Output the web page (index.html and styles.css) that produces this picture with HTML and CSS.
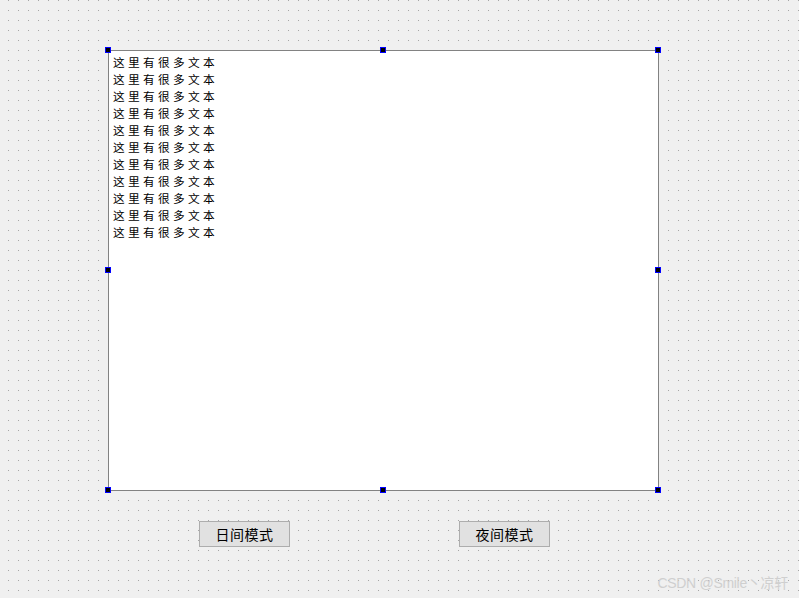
FILE: index.html
```html
<!DOCTYPE html>
<html lang="zh">
<head>
<meta charset="utf-8">
<link rel="stylesheet" href="styles.css">
</head>
<body>
<svg class="grid" width="799" height="598" aria-hidden="true">
  <defs>
    <pattern id="dots" x="8" y="0" width="10" height="10" patternUnits="userSpaceOnUse">
      <rect x="0" y="0" width="1" height="1" fill="#a6a6a6"/>
    </pattern>
  </defs>
  <rect width="799" height="598" fill="url(#dots)"/>
</svg>
<div class="form">
  <div class="editor">
    <div class="text">
      <div class="line">这里有很多文本</div>
      <div class="line">这里有很多文本</div>
      <div class="line">这里有很多文本</div>
      <div class="line">这里有很多文本</div>
      <div class="line">这里有很多文本</div>
      <div class="line">这里有很多文本</div>
      <div class="line">这里有很多文本</div>
      <div class="line">这里有很多文本</div>
      <div class="line">这里有很多文本</div>
      <div class="line">这里有很多文本</div>
      <div class="line">这里有很多文本</div>
    </div>
    <span class="h tl"></span><span class="h tm"></span><span class="h tr"></span>
    <span class="h ml"></span><span class="h mr"></span>
    <span class="h bl"></span><span class="h bm"></span><span class="h br"></span>
  </div>
  <div class="buttons">
    <button class="btn">日间模式</button>
    <button class="btn">夜间模式</button>
  </div>
</div>
<div class="watermark">CSDN @Smile丶凉轩</div>
</body>
</html>
```
FILE: styles.css
```css
html, body {
  margin: 0;
  padding: 0;
  width: 799px;
  height: 598px;
  overflow: hidden;
  background: #f0f0f0;
  font-family: "Noto Sans CJK SC", "Liberation Sans", sans-serif;
}
.grid {
  position: absolute;
  left: 0;
  top: 0;
  z-index: 0;
}
.form {
  position: relative;
  z-index: 1;
  padding: 50px 0 0 108px;
}
.editor {
  position: relative;
  box-sizing: border-box;
  width: 551px;
  height: 441px;
  border: 1px solid #828282;
  background: #ffffff;
}
.text {
  padding: 2px 0 0 4px;
  font-size: 11.7px;
  line-height: 17px;
  letter-spacing: 3.3px;
  color: #000;
}
.line {
  height: 17px;
}
.h {
  position: absolute;
  box-sizing: border-box;
  width: 6px;
  height: 6px;
  border: 1px solid #0000ff;
  background: #000;
}
.tl { left: -4px; top: -4px; }
.tm { left: 271px; top: -4px; }
.tr { right: -3px; top: -4px; }
.ml { left: -4px; top: 216px; }
.mr { right: -3px; top: 216px; }
.bl { left: -4px; bottom: -3px; }
.bm { left: 271px; bottom: -3px; }
.br { right: -3px; bottom: -3px; }
.buttons {
  display: flex;
  gap: 169px;
  margin-top: 30px;
  padding-left: 91px;
}
.btn {
  box-sizing: border-box;
  width: 91px;
  height: 26px;
  padding: 0;
  border: 1px solid #adadad;
  background: #e1e1e1;
  color: #000;
  font-family: "Noto Sans CJK SC", sans-serif;
  font-size: 14px;
  line-height: 24px;
  letter-spacing: 0.5px;
  border-radius: 0;
}
.watermark {
  position: absolute;
  right: 11px;
  bottom: 6px;
  z-index: 2;
  font-family: "Liberation Sans", "Noto Sans CJK SC", sans-serif;
  font-size: 14px;
  color: #cfcfcf;
  letter-spacing: -0.3px;
}
```
